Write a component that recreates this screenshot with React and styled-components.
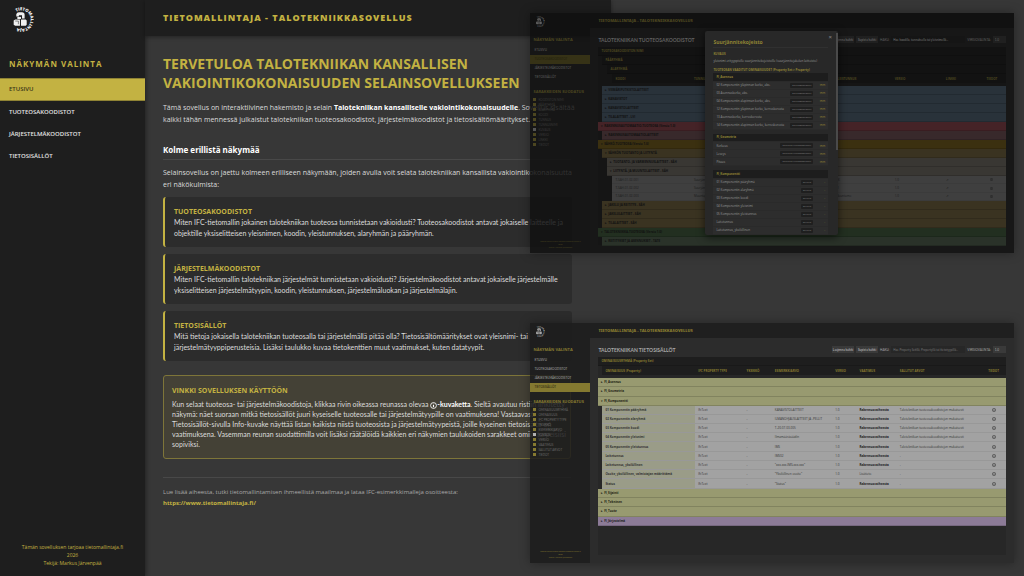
import React from 'react'
import styled, { createGlobalStyle } from 'styled-components'

const colors = {
  dark: '#1e1e1e',
  main: '#373737',
  card: '#2c2c2c',
  gold: '#c3b242',
  text: '#dcdcdc',
}

const GlobalStyle = createGlobalStyle`
  * {
    box-sizing: border-box;
  }
  body {
    margin: 0;
    overflow: hidden;
    background-color: ${colors.main};
    color: ${colors.text};
    font-family: 'Open Sans', 'Noto Sans', sans-serif;
    font-size: 7px;
  }
  a {
    color: inherit;
    text-decoration: none;
  }
  h1, h2, h3, h4, p {
    margin: 0;
    padding: 0;
  }
`

/* ---------- Front page ---------- */

const Page = styled.div`
  position: relative;
  min-height: 100vh;
`
const Shell = styled.div`
  display: grid;
  grid-template-columns: 145px minmax(0, 1fr);
  width: 59.7%;
  min-height: 100vh;
`
const Sidebar = styled.aside`
  display: flex;
  flex-direction: column;
  padding-bottom: 9px;
  background-color: ${colors.dark};
  box-shadow: 1px 0 4px rgba(0, 0, 0, 0.4);
`
const LogoBox = styled.div`
  height: 56px;
  padding: 7px 9px;
`
const SideTitle = styled.h2`
  height: 22px;
  padding-left: 9px;
  color: ${colors.gold};
  font-size: 8px;
  line-height: 15px;
  letter-spacing: 1px;
`
const NavLink = styled.a`
  display: block;
  padding: 0 9px;
  border: solid ${(p) => (p.$active ? '#8f8334' : 'transparent')};
  border-width: 1px 0;
  background-color: ${(p) => (p.$active ? colors.gold : 'transparent')};
  color: ${(p) => (p.$active ? '#3a3618' : '#e4e4e4')};
  font-size: 6px;
  font-weight: 600;
  line-height: ${(p) => (p.$active ? 21 : 20)}px;
`
const SideFooter = styled.footer`
  margin-top: auto;
  color: ${colors.gold};
  font-size: 5px;
  line-height: 8px;
  text-align: center;
`
const Main = styled.main`
  min-width: 0;
`
const Header = styled.header`
  height: 36px;
  padding-left: 18px;
  background-color: ${colors.dark};
  box-shadow: 0 1px 4px rgba(0, 0, 0, 0.4);
  color: ${colors.gold};
  font-size: 9px;
  font-weight: 800;
  line-height: 36px;
  letter-spacing: 1px;
`
const Content = styled.div`
  padding: 18px 40px 18px 18px;
`
const Title = styled.h1`
  color: ${colors.gold};
  font-size: 14px;
  line-height: 19px;
`
const Text = styled.p`
  margin-top: ${(p) => p.$top || 0}px;
  line-height: 12px;
  white-space: nowrap;

  strong {
    color: #fff;
  }
`
const SmallText = styled(Text)`
  font-family: Lato, sans-serif;
  line-height: ${(p) => p.$line || 11}px;
`
const SubTitle = styled.h2`
  margin-top: 17px;
  padding-bottom: 3px;
  border-bottom: 1px solid #484848;
  color: #fff;
  font-family: 'Noto Sans', sans-serif;
  font-size: 8px;
  line-height: 13px;
`
const Cards = styled.div`
  display: grid;
  gap: 7px;
  margin-top: 6px;
`
const Card = styled.section`
  height: 50px;
  padding: 9px;
  border-left: 2px solid ${colors.gold};
  border-radius: 3px;
  background-color: ${colors.card};
`
const CardTitle = styled.h3`
  color: ${colors.gold};
  font-size: 7px;
  line-height: 11px;
`
const Tip = styled.section`
  margin-top: 14px;
  padding: 9px 8px;
  border: 1px solid #7e7539;
  border-radius: 3px;
  background-color: #444136;
`
const More = styled.div`
  margin-top: 18px;
  padding-top: 9px;
  border-top: 1px solid #484848;
  color: #a8a8a8;
  font-size: 6px;
  line-height: 11px;

  a {
    color: ${colors.gold};
    font-weight: 700;
  }
`
const Info = styled.svg`
  vertical-align: middle;
`

/* ---------- Preview windows floating over the page ---------- */

const Window = styled.section`
  position: absolute;
  top: ${(p) => p.$top}px;
  left: 51.8%;
  width: 47.2%;
  height: 240px;
  display: grid;
  grid-template-columns: 60px minmax(0, 1fr);
  background-color: ${(p) => p.$t.shade};
  box-shadow: 0 0 10px rgba(0, 0, 0, 0.35);
  color: ${(p) => p.$t.text};
  font-size: 3px;
  line-height: 4px;
`
const MiniSide = styled.aside`
  display: flex;
  flex-direction: column;
  padding-bottom: 4px;
  color: ${(p) => p.$t.gold};
`
const MiniLogo = styled.div`
  height: 24px;
  padding: 3px 4px;
`
const MiniHeading = styled.h4`
  padding-left: 3px;
  font-size: 4px;
  line-height: 5px;
  white-space: nowrap;
`
const MiniNav = styled.nav`
  height: 47px;
  padding-top: 4px;
`
const MiniLink = styled.a`
  display: block;
  height: 9px;
  padding-left: 4px;
  background-color: ${(p) => (p.$active ? p.$t.active : 'transparent')};
  color: ${(p) => (p.$active ? '#22200e' : p.$t.text)};
  font-family: Lato, sans-serif;
  line-height: 9px;
`
const Filters = styled.div`
  padding: 3px;
`
const Filter = styled.label`
  display: flex;
  align-items: center;
  gap: 2px;
  height: 5px;
  color: ${(p) => p.$t.muted};
  font-family: Lato, sans-serif;
  white-space: nowrap;

  input {
    appearance: none;
    width: 3px;
    height: 3px;
    margin: 0;
    background-color: ${(p) => p.$t.light};
  }
  input:checked {
    background-color: ${(p) => p.$t.gold};
  }
`
const MiniFooter = styled.footer`
  margin-top: auto;
  font-size: 2px;
  line-height: 3px;
  text-align: center;
`
const MiniMain = styled.div`
  min-width: 0;
  background-color: ${(p) => p.$t.main};
`
const MiniHeader = styled.header`
  height: 15px;
  padding-left: 8px;
  background-color: ${(p) => p.$t.header};
  color: ${(p) => p.$t.gold};
  font-family: 'Noto Sans', sans-serif;
  font-size: 4px;
  font-weight: 900;
  line-height: 15px;
`
const Toolbar = styled.div`
  display: flex;
  align-items: center;
  gap: 2px;
  height: 19px;
  padding: 4px 8px 0;
  white-space: nowrap;

  h3 {
    margin: 0 auto 0 0;
    color: ${(p) => p.$t.text};
    font-family: Lato, sans-serif;
    font-size: 5px;
    line-height: 6px;
  }
  button,
  input,
  select {
    appearance: none;
    height: 7px;
    margin: 0;
    padding: 0 2px;
    border: 0;
    background-color: ${(p) => p.$t.control};
    color: ${(p) => p.$t.text};
    font: 400 3px Lato, sans-serif;
  }
  button {
    width: 22px;
    padding: 0;
    font-weight: 700;
    white-space: nowrap;
  }
  input {
    width: 74px;
    background-color: ${(p) => p.$t.panel};
  }
  select {
    width: 13px;
  }
  label {
    font-family: Lato, sans-serif;
  }
`
const Panel = styled.div`
  height: 198px;
  margin: 0 8px;
  background-color: ${(p) => p.$t.panel};
`
const Band = styled.div`
  height: 9px;
  margin-left: ${(p) => p.$indent || 0}px;
  padding-left: 3px;
  border-bottom: 1px solid rgba(0, 0, 0, 0.15);
  background-color: ${(p) => p.$bg};
  color: ${(p) => p.$ink || 'inherit'};
  font-size: 3px;
  font-weight: 700;
  line-height: 8px;
  white-space: nowrap;
`
const Columns = styled.table`
  width: calc(100% - ${(p) => p.$indent}px);
  height: ${(p) => p.$height || 9}px;
  margin-left: ${(p) => p.$indent}px;
  table-layout: fixed;
  border-collapse: collapse;
  background-color: ${(p) => p.$bg};
  color: ${(p) => p.$ink};
  font-size: 3px;
  line-height: 4px;

  th,
  td {
    width: auto;
    padding: 0 3px;
    overflow: hidden;
    text-align: left;
    white-space: nowrap;
  }
  th:last-child,
  td:last-child {
    text-align: center;
  }
  tbody tr {
    border-bottom: 1px solid rgba(0, 0, 0, 0.06);
  }
  tbody td:first-child {
    background-color: ${(p) => p.$first || 'transparent'};
    font-weight: ${(p) => (p.$first ? 700 : 400)};
  }
`
const Col = styled.col`
  width: ${(p) => p.$width}%;
`
const Strong = styled.strong`
  color: #1c1c1c;
`
const Rows = styled.div`
  display: flex;
  flex-direction: column;
  height: ${(p) => p.$height}px;
  margin-top: 3px;

  > div {
    flex: 1;
  }
`

/* ---------- Details dialog ---------- */

const Modal = styled.div`
  position: absolute;
  top: 18px;
  left: 36.2%;
  width: 27.5%;
  height: 204px;
  padding: 8px 10px 0 8px;
  overflow: hidden;
  border-radius: 2px;
  background-color: #282828;
  box-shadow: 0 2px 8px rgba(0, 0, 0, 0.6);
  color: #999;

  h3 {
    padding-bottom: 2px;
    border-bottom: 1px solid #303030;
    color: #8f8334;
    font-size: 5px;
    line-height: 6px;
  }
  h4 {
    color: #8f8334;
    font-size: 3px;
    line-height: 5px;
    white-space: nowrap;
  }
  p {
    padding: 2px 0 5px;
    white-space: nowrap;
  }
`
const ModalIntro = styled.div`
  padding-top: 4px;
`
const Close = styled.button`
  position: absolute;
  top: 3px;
  right: 5px;
  width: 6px;
  height: 6px;
  padding: 0;
  border: 0;
  background: none;
  color: #888;
  font-size: 6px;
  line-height: 6px;
`
const Scroll = styled.div`
  position: absolute;
  top: 2px;
  right: 0;
  width: 2px;
  height: 117px;
  background-color: #4a4a4a;
`
const PropTable = styled.table`
  width: 100%;
  margin: 0 0 4px;
  border-collapse: collapse;
  background-color: #2d2d2d;
  font-size: 3px;
  line-height: 4px;

  tr {
    height: 8px;
    border-bottom: 1px solid #2a2a2a;
  }
  th {
    padding: 0 3px;
    background-color: #1d1d1d;
    color: #8f8334;
    text-align: left;
  }
  td {
    padding: 0 3px;
    white-space: nowrap;
  }
  td:nth-child(2) {
    text-align: right;
  }
  td:last-child {
    width: 12px;
    color: #8f8334;
    text-align: right;
  }
`
const Chip = styled.code`
  padding: 1px 2px;
  border-radius: 1px;
  background-color: #1f1f1f;
  color: #888;
  font-family: 'Liberation Mono', monospace;
  font-size: 2px;
`

const darkTheme = {
  shade: 'rgba(16, 16, 16, 0.84)',
  main: 'rgba(24, 24, 24, 0.8)',
  header: 'rgba(16, 16, 16, 0.7)',
  panel: '#151515',
  head: '#121212',
  control: '#202020',
  gold: '#4c4620',
  active: '#363216',
  text: '#606060',
  muted: '#383838',
  light: '#555555',
}
const lightTheme = {
  shade: 'rgba(28, 28, 28, 0.86)',
  main: 'rgba(46, 46, 46, 0.9)',
  header: 'rgba(30, 30, 30, 0.9)',
  panel: '#272727',
  head: '#1e1e1e',
  control: '#3a3a3a',
  gold: '#867a30',
  active: '#847930',
  text: '#a8a8a8',
  muted: '#686868',
  light: '#b0b0b0',
}

const navItems = ['ETUSIVU', 'TUOTEOSAKOODISTOT', 'JÄRJESTELMÄKOODISTOT', 'TIETOSISÄLLÖT']

const productFilters = [
  'KOODISTON NIMI',
  'PÄÄRYHMÄ',
  'ALARYHMÄ',
  'KOODI',
  'TUNNUS',
  'TUNNUSNIMI',
  'KUVAUS',
  'VERSIO',
  'LINKKI',
  'TIEDOT',
]
const propertyFilters = [
  'OMINAISUUSRYHMÄ',
  'OMINAISUUS',
  'IFC PROPERTY TYPE',
  'YKSIKKÖ',
  'ESIMERKKIARVO',
  'KUVAUS',
  'VERSIO',
  'VAATIMUS',
  'SALLITUT ARVOT',
  'TIEDOT',
]

const productWidths = [20, 36, 15, 13, 9, 7]
const propertyWidths = [23, 12, 7, 15, 6, 10, 21, 6]

const codes = 'Talotekniikan tuoteosakoodistojen mukaisesti'
const properties = [
  ['01 Komponentin pääryhmä', 'KANAVISTOLAITTEET', codes],
  ['02 Komponentin alaryhmä', 'ILMANOHJAUSLAITTEET JA -PELLIT', codes],
  ['03 Komponentin koodi', 'T-20-07-03-005', codes],
  ['04 Komponentin yleisnimi', 'Ilmamääräsäädin', codes],
  ['05 Komponentin yleistunnus', 'IMS', codes],
  ['Laitetunnus', 'IMS02', '-'],
  ['Laitetunnus, yksilöllinen', '"xxx-xxx-IMS-xxx-xxx"', '-'],
  ['Osoite, yksilöllinen, valmistajan määrittämä', '"Yksilöllinen osoite"', '-'],
  ['Status', '"Status"', '-'],
]

const productsTop = [
  ['▸  VIEMÄRIPUTKISTOLAITTEET', 4, '#29323a'],
  ['▸  KANAVISTOT', 4, '#29323a'],
  ['▸  KANAVISTOLAITTEET', 4, '#29323a'],
  ['▸  TILALAITTEET - LVI', 4, '#29323a'],
  ['▾  RAKENNUSAUTOMAATIO-TUOTEOSA (Versio 1.0)', 0, '#452327'],
  ['▸  RAKENNUSAUTOMAATIOLAITTEET', 4, '#38292b'],
  ['▾  SÄHKÖ-TUOTEOSA (Versio 1.0)', 0, '#3b3010'],
  ['▾  SÄHKÖN TUOTANTO JA LIITYNTÄ', 4, '#3a3321'],
  ['▸  TUOTANTO- JA VARMENNUSLAITTEET - SÄH', 9, '#393733'],
  ['▾  LIITYNTÄ- JA MUUNTOLAITTEET - SÄH', 9, '#393733'],
]
const productsBottom = [
  ['▸  JAKELU JA REITITYS - SÄH', 4, '#3a3321'],
  ['▸  JAKELULAITTEET - SÄH', 4, '#3a3321'],
  ['▸  TILALAITTEET - SÄH', 4, '#3a3321'],
  ['▾  TALOTEKNIIKKA-TUOTEOSA (Versio 1.0)', 0, '#222f20'],
  ['▸  REITITYKSET JA ASENNUKSET - TATE', 4, '#2a3229'],
]

const dialogGroups = [
  {
    name: 'FI_Asennus',
    type: 'IfcLengthMeasure',
    unit: 'mm',
    rows: [
      '02 Komponentin yläpinnan korko, abs.',
      '03 Asennuskorko, abs.',
      '04 Komponentin alapinnan korko, abs.',
      '12 Komponentin yläpinnan korko, kerroskorosta',
      '13 Asennuskorko, kerroskorosta',
      '14 Komponentin alapinnan korko, kerroskorosta',
    ],
  },
  {
    name: 'FI_Geometria',
    type: 'IfcPositiveLengthMeasure',
    unit: 'mm',
    rows: ['Korkeus', 'Leveys', 'Pituus'],
  },
  {
    name: 'FI_Komponentti',
    type: 'IfcText',
    unit: '-',
    rows: [
      '01 Komponentin pääryhmä',
      '02 Komponentin alaryhmä',
      '03 Komponentin koodi',
      '04 Komponentin yleisnimi',
      '05 Komponentin yleistunnus',
      'Laitetunnus',
      'Laitetunnus, yksilöllinen',
    ],
  },
]

function Logo({ size, color, id }) {
  return (
    <svg width={size} height={size} viewBox="0 0 48 48" role="img" aria-label="Tietomallintaja">
      <defs>
        <path id={id} d="M14 9 A18 18 0 1 1 12 38" />
      </defs>
      <text fill={color} fontFamily="Open Sans, sans-serif" fontSize="8" fontWeight="800">
        <textPath href={`#${id}`}>TIETOMALLINTAJA</textPath>
      </text>
      <g fill={color}>
        <path d="M14 14 q1 -4 5 -4 h6 q5 0 5 5 v7 h-5 v-6 h-6 v2 h-5 z" />
        <path d="M16 19 h7 v4 h-7 z" />
        <path d="M9 26 l3 -2 h9 v12 h-9 l-3 -2 z" />
        <path d="M23 24 h9 l2 2 v8 l-2 2 h-9 z" />
      </g>
      <path d="M12 27 h6 v6" fill="none" stroke={colors.dark} />
    </svg>
  )
}

function InfoIcon({ size }) {
  return (
    <Info width={size} height={size} viewBox="0 0 12 12" aria-hidden="true">
      <circle cx="6" cy="6" r="5" fill="none" stroke="currentColor" strokeWidth="1.5" />
      <path d="M6 5 V9 M6 3 V4" stroke="currentColor" strokeWidth="2" />
    </Info>
  )
}

function ColGroup({ widths }) {
  return (
    <colgroup>
      {widths.map((width, i) => (
        <Col key={i} $width={width} />
      ))}
    </colgroup>
  )
}

function MiniSidebar({ theme, active, filters, id }) {
  return (
    <MiniSide $t={theme}>
      <MiniLogo>
        <Logo size={11} color={theme.text} id={`${id}-logo`} />
      </MiniLogo>
      <MiniHeading>NÄKYMÄN VALINTA</MiniHeading>
      <MiniNav>
        {navItems.map((item) => (
          <MiniLink key={item} href="#" $t={theme} $active={item === active}>
            {item}
          </MiniLink>
        ))}
      </MiniNav>
      <MiniHeading>SARAKKEIDEN SUODATUS</MiniHeading>
      <Filters>
        {filters.map((item) => (
          <Filter key={item} $t={theme}>
            <input type="checkbox" defaultChecked={item !== 'KUVAUS'} />
            {item}
          </Filter>
        ))}
      </Filters>
      <MiniFooter>
        Tämän sovelluksen tarjoaa tietomallintaja.fi
        <br />
        2026
        <br />
        Tekijä: Markus Järvenpää
      </MiniFooter>
    </MiniSide>
  )
}

function MiniToolbar({ theme, title, placeholder, id }) {
  return (
    <Toolbar $t={theme}>
      <h3>{title}</h3>
      <button type="button">Laajenna kaikki</button>
      <button type="button">Supista kaikki</button>
      <label htmlFor={`${id}-search`}>HAKU:</label>
      <input id={`${id}-search`} type="text" placeholder={placeholder} />
      <label htmlFor={`${id}-version`}>VERSIOVALINTA:</label>
      <select id={`${id}-version`}>
        <option>1.0</option>
      </select>
    </Toolbar>
  )
}

function ProductWindow() {
  const t = darkTheme
  return (
    <Window $top={13} $t={t}>
      <MiniSidebar theme={t} active="TUOTEOSAKOODISTOT" filters={productFilters} id="products" />
      <MiniMain $t={t}>
        <MiniHeader $t={t}>TIETOMALLINTAJA - TALOTEKNIIKKASOVELLUS</MiniHeader>
        <MiniToolbar
          theme={t}
          title="TALOTEKNIIKAN TUOTEOSAKOODISTOT"
          placeholder="Hae koodilla, tunnuksella tai yleisnimellä..."
          id="products"
        />
        <Panel $t={t}>
          <Band $bg={t.head} $ink={t.gold}>TUOTEOSAKOODISTON NIMI</Band>
          <Band $bg={t.head} $ink={t.gold} $indent={4}>PÄÄRYHMÄ</Band>
          <Band $bg={t.head} $ink={t.gold} $indent={9}>ALARYHMÄ</Band>
          <Columns $indent={14} $bg={t.head} $ink={t.gold}>
            <ColGroup widths={productWidths} />
            <thead>
              <tr>
                <th>KOODI</th>
                <th>TUNNUSNIMI</th>
                <th>YLEISTUNNUS</th>
                <th>VERSIO</th>
                <th>LINKKI</th>
                <th>TIEDOT</th>
              </tr>
            </thead>
          </Columns>
          <Rows $height={160}>
            {productsTop.map(([name, indent, bg]) => (
              <Band key={name} $indent={indent} $bg={bg} $ink="#111">
                {name}
              </Band>
            ))}
            <Columns $indent={14} $height={27} $bg="#3f3f3f" $ink="#1c1c1c">
              <ColGroup widths={productWidths} />
              <tbody>
                {['T-SAH-01-02-001', 'T-SAH-01-02-002', 'T-SAH-01-02-003'].map((code, i) => (
                  <tr key={code}>
                    <td>{code}</td>
                    <td>{i === 2 ? 'Muuntaja' : 'Suurjännitekojeisto'}</td>
                    <td>{['SJK', 'M', 'Muuntamo'][i]}</td>
                    <td>1.0</td>
                    <td>↗</td>
                    <td>
                      <InfoIcon size={3} />
                    </td>
                  </tr>
                ))}
              </tbody>
            </Columns>
            {productsBottom.map(([name, indent, bg]) => (
              <Band key={name} $indent={indent} $bg={bg} $ink="#111">
                {name}
              </Band>
            ))}
          </Rows>
        </Panel>
      </MiniMain>
      <Modal role="dialog" aria-label="Suurjännitekojeisto">
        <Close type="button" aria-label="Sulje">
          ×
        </Close>
        <Scroll />
        <h3>Suurjännitekojeisto</h3>
        <ModalIntro>
          <h4>KUVAUS</h4>
          <p>yleisnimi erityyppisille suurjännitekojeistoille (suurjännitejakelun laitteisto)</p>
          <h4>TUOTEOSAN VAADITUT OMINAISUUDET (Property Set &gt; Property)</h4>
        </ModalIntro>
        {dialogGroups.map((group) => (
          <PropTable key={group.name}>
            <thead>
              <tr>
                <th colSpan={3}>{group.name}</th>
              </tr>
            </thead>
            <tbody>
              {group.rows.map((row) => (
                <tr key={row}>
                  <td>{row}</td>
                  <td>
                    <Chip>{group.type}</Chip>
                  </td>
                  <td>{group.unit}</td>
                </tr>
              ))}
            </tbody>
          </PropTable>
        ))}
      </Modal>
    </Window>
  )
}

function PropertyWindow() {
  const t = lightTheme
  const olive = '#989a70'
  return (
    <Window $top={323} $t={t}>
      <MiniSidebar theme={t} active="TIETOSISÄLLÖT" filters={propertyFilters} id="props" />
      <MiniMain $t={t}>
        <MiniHeader $t={t}>TIETOMALLINTAJA - TALOTEKNIIKKASOVELLUS</MiniHeader>
        <MiniToolbar
          theme={t}
          title="TALOTEKNIIKAN TIETOSISÄLLÖT"
          placeholder="Hae Property Setillä, Propertyllä tai tietotyypillä..."
          id="props"
        />
        <Panel $t={t}>
          <Band $bg={t.head} $ink={t.gold}>OMINAISUUSRYHMÄ (Property Set)</Band>
          <Columns $indent={4} $bg={t.head} $ink={t.gold}>
            <ColGroup widths={propertyWidths} />
            <thead>
              <tr>
                <th>OMINAISUUS (Property)</th>
                <th>IFC PROPERTY TYPE</th>
                <th>YKSIKKÖ</th>
                <th>ESIMERKKIARVO</th>
                <th>VERSIO</th>
                <th>VAATIMUS</th>
                <th>SALLITUT ARVOT</th>
                <th>TIEDOT</th>
              </tr>
            </thead>
          </Columns>
          <Rows $height={148}>
            {['▸  FI_Asennus', '▸  FI_Geometria', '▾  FI_Komponentti'].map((name) => (
              <Band key={name} $bg={olive} $ink="#1c1c12">
                {name}
              </Band>
            ))}
            <Columns $indent={4} $height={83} $bg="#a2a2a2" $ink="#333" $first="#9a9c88">
              <ColGroup widths={propertyWidths} />
              <tbody>
                {properties.map(([name, example, allowed], i) => (
                  <tr key={name}>
                    <td>{name}</td>
                    <td>IfcText</td>
                    <td>-</td>
                    <td>{example}</td>
                    <td>1.0</td>
                    <td>{i === 7 ? 'Lisätieto' : <Strong>Rakennusvaiheesta</Strong>}</td>
                    <td>{allowed}</td>
                    <td>
                      <InfoIcon size={4} />
                    </td>
                  </tr>
                ))}
              </tbody>
            </Columns>
            {['▸  FI_Sijainti', '▸  FI_Tekninen', '▸  FI_Tuote'].map((name) => (
              <Band key={name} $bg={olive} $ink="#1c1c12">
                {name}
              </Band>
            ))}
            <Band $bg="#8c7b97" $ink="#1c1c1c">▸  FI_Järjestelmä</Band>
          </Rows>
        </Panel>
      </MiniMain>
    </Window>
  )
}

export default function App() {
  return (
    <>
      <GlobalStyle />
      <Page>
        <Shell>
          <Sidebar>
            <LogoBox>
              <Logo size={25} color="#f0f0f0" id="main-logo" />
            </LogoBox>
            <SideTitle>NÄKYMÄN VALINTA</SideTitle>
            <nav>
              {navItems.map((item) => (
                <NavLink key={item} href="#" $active={item === 'ETUSIVU'}>
                  {item}
                </NavLink>
              ))}
            </nav>
            <SideFooter>
              Tämän sovelluksen tarjoaa tietomallintaja.fi
              <br />
              2026
              <br />
              Tekijä: Markus Järvenpää
            </SideFooter>
          </Sidebar>
          <Main>
            <Header>TIETOMALLINTAJA - TALOTEKNIIKKASOVELLUS</Header>
            <Content>
              <Title>
                TERVETULOA TALOTEKNIIKAN KANSALLISEN
                <br />
                VAKIOINTIKOKONAISUUDEN SELAINSOVELLUKSEEN
              </Title>
              <Text $top={10}>
                Tämä sovellus on interaktiivinen hakemisto ja selain{' '}
                <strong>Talotekniikan kansalliselle vakiointikokonaisuudelle</strong>. Sovellus sisältää
                <br />
                kaikki tähän mennessä julkaistut talotekniikan tuoteosakoodistot, järjestelmäkoodistot ja
                tietosisältömääritykset.
              </Text>
              <SubTitle>Kolme erillistä näkymää</SubTitle>
              <Text $top={7}>
                Selainsovellus on jaettu kolmeen erilliseen näkymään, joiden avulla voit selata
                talotekniikan kansallista vakiointikokonaisuutta
                <br />
                eri näkökulmista:
              </Text>
              <Cards>
                <Card>
                  <CardTitle>TUOTEOSAKOODISTOT</CardTitle>
                  <SmallText>
                    Miten IFC-tietomallin jokainen talotekniikan tuoteosa tunnistetaan vakioidusti?
                    Tuoteosakoodistot antavat jokaiselle laitteelle ja
                    <br />
                    objektille yksiselitteisen yleisnimen, koodin, yleistunnuksen, alaryhmän ja
                    pääryhmän.
                  </SmallText>
                </Card>
                <Card>
                  <CardTitle>JÄRJESTELMÄKOODISTOT</CardTitle>
                  <SmallText>
                    Miten IFC-tietomallin talotekniikan järjestelmät tunnistetaan vakioidusti?
                    Järjestelmäkoodistot antavat jokaiselle järjestelmälle
                    <br />
                    yksiselitteisen järjestelmätyypin, koodin, yleistunnuksen, järjestelmäluokan ja
                    järjestelmälajin.
                  </SmallText>
                </Card>
                <Card>
                  <CardTitle>TIETOSISÄLLÖT</CardTitle>
                  <SmallText>
                    Mitä tietoja jokaisella talotekniikan tuoteosalla tai järjestelmällä pitää olla?
                    Tietosisältömääritykset ovat yleisnimi- tai
                    <br />
                    järjestelmätyyppiperusteisia. Lisäksi taulukko kuvaa tietokenttien muut
                    vaatimukset, kuten datatyypit.
                  </SmallText>
                </Card>
              </Cards>
              <Tip>
                <CardTitle>VINKKI SOVELLUKSEN KÄYTTÖÖN</CardTitle>
                <SmallText $top={3} $line={10}>
                  Kun selaat tuoteosa- tai järjestelmäkoodistoja, klikkaa rivin oikeassa reunassa olevaa{' '}
                  <strong>
                    <InfoIcon size={7} />
                    -kuvaketta
                  </strong>
                  . Sieltä avautuu ristiin linkitetty
                  <br />
                  näkymä: näet suoraan mitkä tietosisällöt juuri kyseiselle tuoteosalle tai
                  järjestelmätyypille on vaatimuksena! Vastaavasti
                  <br />
                  Tietosisällöt-sivulla Info-kuvake näyttää listan kaikista niistä tuoteosista ja
                  järjestelmätyypeistä, joille kyseinen tietosisältö on
                  <br />
                  vaatimuksena. Vasemman reunan suodattimilla voit lisäksi räätälöidä kaikkien eri
                  näkymien taulukoiden sarakkeet omiin tarpeisiisi
                  <br />
                  sopiviksi.
                </SmallText>
              </Tip>
              <More>
                Lue lisää aiheesta, tutki tietomallintamisen ihmeellistä maailmaa ja lataa
                IFC-esimerkkimalleja osoitteesta:
                <br />
                <a href="https://www.tietomallintaja.fi/">https://www.tietomallintaja.fi/</a>
              </More>
            </Content>
          </Main>
        </Shell>
        <ProductWindow />
        <PropertyWindow />
      </Page>
    </>
  )
}
